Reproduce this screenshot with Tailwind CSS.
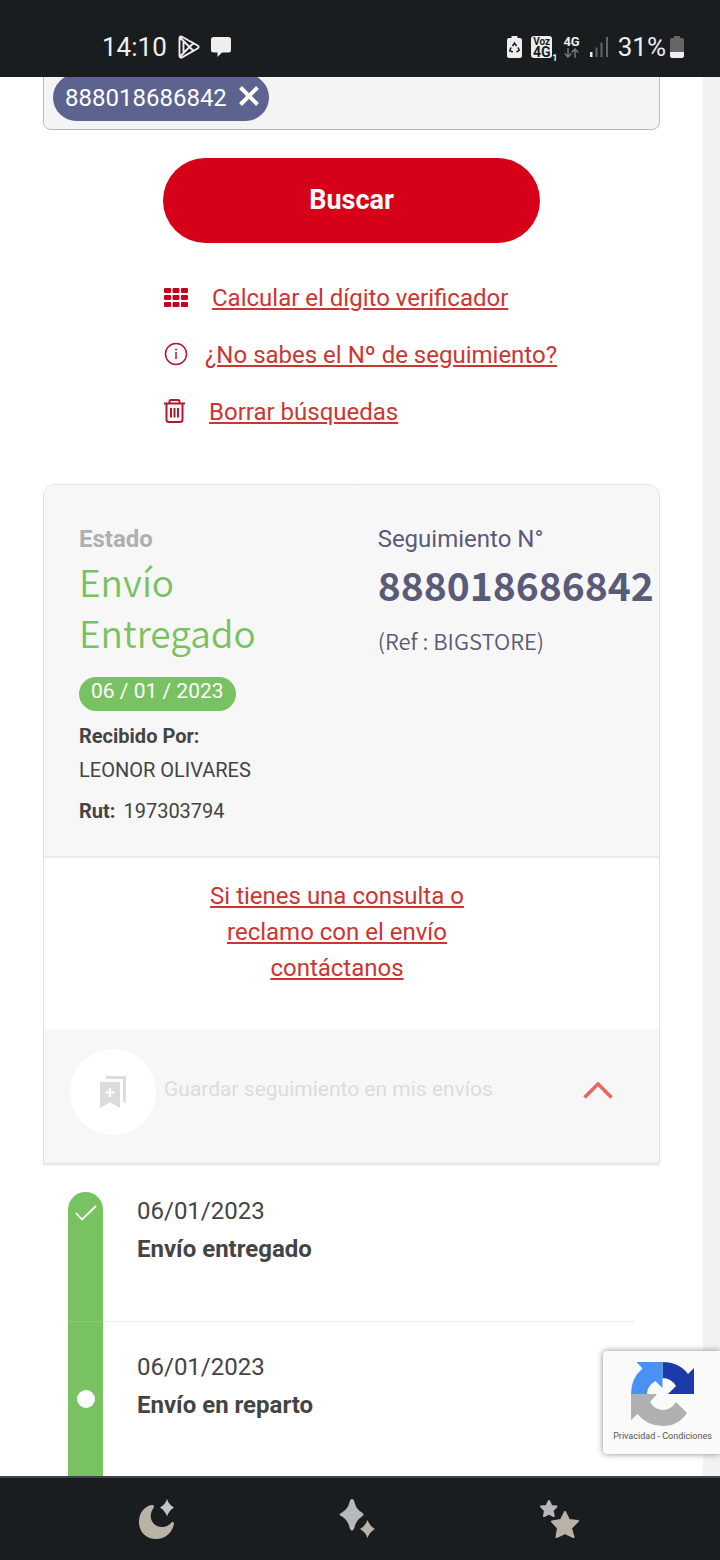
<!DOCTYPE html>
<html lang="es">
<head>
<meta charset="utf-8">
<meta name="viewport" content="width=device-width, initial-scale=1">
<title>Seguimiento de envíos</title>
<script src="https://cdn.jsdelivr.net/npm/@tailwindcss/browser@4"></script>
</head>
<body class="flex min-h-screen flex-col bg-white font-['Roboto','Liberation_Sans',sans-serif] text-[#444]">

<header class="relative z-10 flex h-[77px] items-center justify-between bg-[#191d20] pt-[17px] pr-9 pl-[102px] text-[#eee]">
  <div class="flex items-center">
    <span class="text-[26px]">14:10</span>
    <svg class="ml-[11px] h-6 w-[22px]" viewBox="0 0 22 24" fill="none" stroke="#eee" stroke-width="1.9" stroke-linejoin="round" stroke-linecap="round"><path d="M1.5 3.2C1.5 1.6 2.8 1 4 1.7L19.6 10.5C21 11.4 21 12.7 19.6 13.5L4 22.3C2.8 23 1.5 22.400 1.500 20.800ZM2 2.500L15.500 16M2 21.500L15.500 8M5.500 7V17"/></svg>
    <svg class="ml-[11px] h-[22px] w-5" viewBox="0 0 20 22"><path d="M2.500 1h15Q20 1 20 3.500v10.500q0 2.500-2.500 2.500H11l-4.500 4.500v-4.500H2.500Q0 16.500 0 14V3.500Q0 1 2.500 1z" fill="#eee"/></svg>
  </div>
  <div class="flex items-center">
    <svg class="h-[22px] w-[15px]" viewBox="0 0 15 22"><path d="M4.500 0h6v2H13q2 0 2 2v16q0 2-2 2H2q-2 0-2-2V4q0-2 2-2h2.500z" fill="#eee"/><path d="M5.500 10l2-3 2 3M11 11.500l1.200 2.800-2.700 1.700M5.800 16l-3-1.200 1.200-3.300" fill="none" stroke="#191d20" stroke-width="1.500"/></svg>
    <span class="ml-[9px] flex h-[22px] w-[21px] flex-col items-center justify-center rounded-[3px] bg-[#eee] font-bold text-[#191d20]"><span class="text-[10px] leading-[9px]">Voz</span><span class="text-[14px] leading-[12px]">4G</span></span>
    <span class="mb-1 self-end text-[9px] leading-[9px] font-bold">1</span>
    <span class="ml-[6px] flex flex-col items-center"><span class="text-[13px] leading-[12px] font-bold">4G</span>
      <svg class="h-[10px] w-[15px]" viewBox="0 0 15 10" fill="none" stroke="#777" stroke-width="1.500"><path d="M4 0v9M.700 5.500L4 9l3.300-3.500M11 10V1M7.700 4.500L11 1l3.300 3.500"/></svg></span>
    <svg class="ml-[10px] h-5 w-[18px]" viewBox="0 0 18 20"><path d="M0 15h2.500v5H0z" fill="#eee"/><path d="M5.500 10.500h2V20h-2zM10.500 5.500h2V20h-2zM16 0h2v20h-2z" fill="#666"/></svg>
    <span class="ml-[10px] text-[26px]">31%</span>
    <svg class="ml-[4px] h-[22px] w-[14px]" viewBox="0 0 14 22"><path d="M4 0h6v2h2q2 0 2 2v12H0V4q0-2 2-2h2z" fill="#666"/><path d="M0 16h14v4q0 2-2 2H2q-2 0-2-2z" fill="#eee"/></svg>
  </div>
</header>

<main class="relative flex grow flex-col border-r-[17px] border-[#f2f2f2] pr-[43px] pl-[43px]">
  <form class="flex flex-col items-center">
    <div class="-mt-3 flex w-full items-end rounded-b-[8px] border border-[#bbb] bg-[#f4f4f4] px-[9px] pt-2 pb-[8px]">
      <span class="flex h-[47px] items-center rounded-full bg-[#5d638f] pr-[10px] pl-3 text-2xl text-white">888018686842
        <button type="button" aria-label="Quitar" class="mb-1 ml-3"><svg class="h-5 w-5" viewBox="0 0 20 20" stroke="#fff" stroke-width="4"><path d="M1.500 1.500l17 17M18.500 1.500l-17 17"/></svg></button>
      </span>
      <input type="text" aria-label="Número de seguimiento" class="h-[47px] min-w-0 grow bg-transparent px-2 text-2xl outline-none">
    </div>
    <button type="button" class="mt-[28px] h-[85px] w-[61%] rounded-full bg-[#d70019] text-[27px] font-bold text-white">Buscar</button>
  </form>

  <ul class="mt-[34px] pl-[121px] text-2xl text-[#cd3532]">
    <li class="flex h-[42px] items-center"><svg class="mb-[2px] h-[19px] w-6" viewBox="0 0 24 19" fill="#c8001c"><rect width="7" height="5" rx="1"/><rect x="8.500" width="7" height="5" rx="1"/><rect x="17" width="7" height="5" rx="1"/><rect y="7" width="7" height="5" rx="1"/><rect x="8.500" y="7" width="7" height="5" rx="1"/><rect x="17" y="7" width="7" height="5" rx="1"/><rect y="14" width="7" height="5" rx="1"/><rect x="8.500" y="14" width="7" height="5" rx="1"/><rect x="17" y="14" width="7" height="5" rx="1"/></svg>
      <a href="#" class="ml-6 underline">Calcular el dígito verificador</a></li>
    <li class="mt-[15px] flex h-[42px] items-center"><svg class="mb-[2px] h-6 w-6" viewBox="0 0 24 24" fill="none" stroke="#b9152c" stroke-width="1.500"><circle cx="12" cy="12" r="10.500"/><path d="M12 10v7M12 6.500v2"/></svg>
      <a href="#" class="ml-[17px] underline">¿No sabes el Nº de seguimiento?</a></li>
    <li class="mt-[15px] flex h-[42px] items-center"><svg class="mb-[2px] h-6 w-[21px]" viewBox="0 0 21 24" fill="none" stroke="#b9152c" stroke-width="2"><path d="M0 4.500h21M5.500 4V2.500Q5.500 1 7 1h7q1.500 0 1.500 1.500V4M2.500 5v15.500Q2.500 23 5 23h11q2.500 0 2.500-2.500V5M7 9v9.500M10.500 9v9.500M14 9v9.500" /></svg>
      <a href="#" class="ml-6 underline">Borrar búsquedas</a></li>
  </ul>

  <section class="mt-[51px] rounded-t-[12px] border border-[#e2e2e2] shadow-[0_2px_1px_#f0f0f0]">
    <div class="flex rounded-t-[12px] border-b-2 border-[#ebebeb] bg-[#f7f7f7]">
      <div class="w-[51%] border-r border-[#fafafa] pt-10 pb-[28px] pl-[35px] text-xl">
        <p class="text-2xl leading-[28px] font-bold text-[#b0b0b0]">Estado</p>
        <h2 class="mt-[3px] w-min font-['Noto_Sans_CJK_SC',sans-serif] text-[37px] leading-[51px] font-[350] text-[#79c262]">Envío Entregado</h2>
        <span class="mt-[19px] inline-flex h-[34px] items-center rounded-full bg-[#79c262] px-3 pb-1 text-[21px] text-white">06 / 01 / 2023</span>
        <p class="mt-2 leading-[34px] font-bold">Recibido Por:</p>
        <p class="leading-[34px]">LEONOR OLIVARES</p>
        <p class="mt-[7px] leading-[34px]"><b class="mr-2">Rut:</b>197303794</p>
      </div>
      <div class="w-0 grow pt-10 pl-[20px] text-[#5a5b78]">
        <p class="text-2xl leading-[28px]">Seguimiento N°</p>
        <p class="mt-[3px] font-['Noto_Sans_CJK_SC',sans-serif] text-[39px] leading-[56px] font-bold">888018686842</p>
        <p class="mt-[11px] font-['Noto_Sans_CJK_SC',sans-serif] text-[22px] leading-[34px] font-[350]">(Ref : BIGSTORE)</p>
      </div>
    </div>
    <p class="flex justify-center pt-[20px] pr-[29px] pb-[43px] text-center text-2xl leading-[36px] text-[#cd3532]"><a href="#" class="w-[270px] underline">Si tienes una consulta o reclamo con el envío contáctanos</a></p>
    <div class="flex h-[134px] items-center bg-[#f7f7f7] pr-[46px] pb-2 pl-[26px]">
      <button type="button" class="flex grow items-center text-left text-[21px] text-[#dcdcdc]"><span class="mr-2 flex size-[86px] items-center justify-center rounded-full bg-white"><svg class="h-8 w-[26px]" viewBox="0 0 26 32"><path d="M0 6h20v26l-10-5.500L0 32zM6 0h20v27l-3-2V3H6z" fill="#dcdcdc"/><path d="M10 12v9M5.500 16.500h9" stroke="#fff" stroke-width="2"/></svg></span><span class="pb-1">Guardar seguimiento en mis envíos</span></button>
      <button type="button" aria-label="Ocultar detalle" class="pb-1"><svg class="h-[18px] w-[30px]" viewBox="0 0 30 18" fill="none" stroke="#eb6464" stroke-width="3.500"><path d="M1.500 16.500L15 3l13.500 13.500"/></svg></button>
    </div>
  </section>

  <ol class="mt-[28px] mr-[25px] ml-[25px] flex grow flex-col text-2xl leading-[38px]">
    <li class="flex min-h-[130px]">
      <span class="flex w-[35px] justify-center rounded-t-full border-b border-[#8cca79] bg-[#79c262]"><svg class="mt-[13px] h-4 w-[22px]" viewBox="0 0 22 16" fill="none" stroke="#fff" stroke-width="1.800"><path d="M1 8l6 6.500L21 1"/></svg></span>
      <div class="grow border-b border-[#eee] pl-[34px]"><time class="block">06/01/2023</time><strong class="block">Envío entregado</strong></div>
    </li>
    <li class="flex min-h-[153px] grow">
      <span class="flex w-[35px] items-center justify-center bg-[#79c262]"><span class="size-[18px] rounded-full bg-white"></span></span>
      <div class="grow pt-[26px] pl-[34px]"><time class="block">06/01/2023</time><strong class="block">Envío en reparto</strong></div>
    </li>
  </ol>

  <aside class="absolute -right-[17px] bottom-[22px] flex h-[103px] w-[117px] flex-col items-center rounded-l-[4px] bg-[#fafafa] pt-[11px] pl-[2px] text-[#555] shadow-[0_0_6px_#888]">
    <svg class="h-16 w-16" viewBox="0 0 64 64"><path d="M31.500 0Q48 0 57 12l6-6v26H37l8-8q-5-8-13.500-8z" fill="#1c3aa9"/><path d="M31.500 0v26l-7-7q-8.500 5-8.500 13H0Q0 16 11.500 6.500L5.500 0z" fill="#4a90f5"/><path d="M0 32h26l-7 8q5 8 13 8 8 0 13-8l11 11Q47 64 32 64 16 64 6.500 52L0 58z" fill="#b0b0b0"/></svg>
    <p class="text-[9px] leading-[20px] whitespace-nowrap"><a href="#">Privacidad</a> - <a href="#">Condiciones</a></p>
  </aside>
</main>

<nav class="flex h-[84px] items-center justify-between border-t-2 border-[#41454a] bg-[#191d20] pr-[141px] pb-px pl-[138px]">
  <button type="button" aria-label="Recientes"><svg class="h-10 w-9" viewBox="0 0 36 40"><path d="M14 6Q17 6 15.500 9C9 18 15 28 24 28c6 0 8-3 10-5q2-.500 2 2C34 34 27 40 18 40 8 40 1 33 1 23 1 13 7 7 14 6z" fill="#b9b3a7"/><path d="M29 0q2 6 7 8.500-5 3-7 9-2-6-7-9Q27 6 29 0z" fill="#c3c4c7"/></svg></button>
  <button type="button" aria-label="Inicio"><svg class="h-10 w-9" viewBox="0 0 36 40"><path d="M13 0q2 0 3 5 2 6 7 8.500 3 2 0 4-5 3-7 9-1 5-3 5t-3-5q-2-6-7-9-5-2 0-4 5-3 7-8.500 1-5 3-5z" fill="#b7b8bb"/><path d="M28.500 21q2 6 7.500 9-5.500 3-7.500 9-2-6-7.500-9 5.500-3 7.500-9z" fill="#b9b3a7"/></svg></button>
  <button type="button" aria-label="Atrás"><svg class="h-10 w-10" viewBox="0 0 40 40" stroke-linejoin="round" stroke-width="2"><path d="M10 2l2.300 5 5.200.500-4 4 1.300 5.500-4.800-2.500L5 17l1-5.500-4-4 5.500-.500z" fill="#b7b8bb" stroke="#b7b8bb"/><path d="M26 13l4 8 9 1-7 7 2.500 9-8.500-4-8.500 4 1.500-9-6-6.500 9-1.500z" fill="#b9b3a7" stroke="#b9b3a7"/></svg></button>
</nav>
</body>
</html>
